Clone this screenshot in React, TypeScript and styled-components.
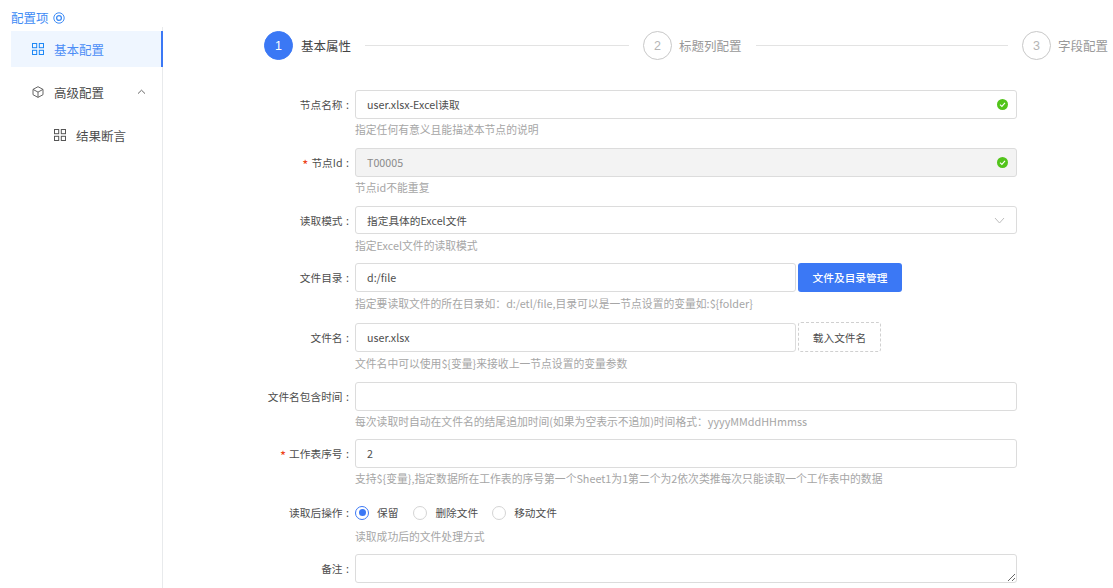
import * as React from "react";
import styled, { createGlobalStyle } from "styled-components";

const GlobalStyle = createGlobalStyle`
    html, body {
        margin: 0;
        height: 100%;
        overflow: hidden;
        background: #fff;
    }
    body, input, textarea, button {
        font-family: "Noto Sans CJK SC", "Noto Sans", sans-serif;
    }
`;

const Page = styled.div`
    display: flex;
    height: 588px;
    overflow: hidden;
    color: #4d4d4d;
`;

const Sidebar = styled.aside`
    width: 152px;
    margin-left: 10px;
    padding-left: 1px;
    flex: none;
    display: flex;
    flex-direction: column;
`;

const SidebarTitle = styled.div`
    height: 27px;
    padding-top: 8px;
    box-sizing: border-box;
    display: flex;
    align-items: center;
    gap: 4px;
    font-size: 12.5px;
    line-height: 14px;
    color: #3f8cf5;
`;

const Menu = styled.nav`
    flex: 1;
    padding-top: 4px;
    border-right: 1px solid #e8eaec;
`;

const MenuItem = styled.div<{ $active?: boolean; $indent?: number }>`
    height: 36px;
    margin-right: -1px;
    margin-bottom: 7px;
    padding-left: ${(p) => p.$indent ?? 21}px;
    padding-right: 15px;
    box-sizing: border-box;
    display: flex;
    align-items: center;
    font-size: 12.5px;
    color: ${(p) => (p.$active ? "#4c8df6" : "#4d4d4d")};
    background: ${(p) => (p.$active ? "#eff6ff" : "transparent")};
    border-right: 2px solid ${(p) => (p.$active ? "#3b78f5" : "transparent")};
`;

const MenuIcon = styled.span<{ $active?: boolean }>`
    width: 22px;
    display: flex;
    color: ${(p) => (p.$active ? "#1e88f5" : "#555")};
`;

const Chevron = styled.span`
    margin-left: auto;
    display: flex;
    color: #555;
`;

const Main = styled.main`
    flex: 1;
    min-width: 0;
`;

const Steps = styled.div`
    display: flex;
    margin: 31px 0 30px 101px;
`;

const Step = styled.div<{ $last?: boolean }>`
    display: flex;
    align-items: center;
    flex: ${(p) => (p.$last ? "none" : "0 0 379px")};
`;

const StepDot = styled.div<{ $active?: boolean }>`
    width: 29px;
    height: 29px;
    box-sizing: border-box;
    border-radius: 50%;
    flex: none;
    display: flex;
    align-items: center;
    justify-content: center;
    font-size: 12.5px;
    font-family: "Liberation Sans", sans-serif;
    color: ${(p) => (p.$active ? "#fff" : "#b5b5b5")};
    background: ${(p) => (p.$active ? "#3b78f5" : "#fff")};
    border: 1px solid ${(p) => (p.$active ? "#3b78f5" : "#c8c8c8")};
`;

const StepLabel = styled.div<{ $active?: boolean }>`
    margin-left: ${(p) => (p.$active ? 8 : 7)}px;
    font-size: 12.5px;
    white-space: nowrap;
    color: ${(p) => (p.$active ? "#444" : "#999")};
`;

const StepLine = styled.div`
    flex: 1;
    height: 1px;
    margin: 0 14px;
    background: #e3e3e3;
`;

const Form = styled.form`
    display: flex;
    flex-direction: column;
`;

const Row = styled.div<{ $pitch: number }>`
    display: grid;
    grid-template-columns: 187px 662px;
    column-gap: 5px;
    height: ${(p) => p.$pitch}px;
    align-content: start;
`;

const Label = styled.label`
    height: 29px;
    padding-right: 1px;
    box-sizing: border-box;
    display: flex;
    align-items: center;
    justify-content: flex-end;
    font-size: 10.7px;
    color: #4d4d4d;
    white-space: nowrap;
`;

const Colon = styled.span`
    margin-left: 3.5px;
`;

const Required = styled.span`
    color: #ed4014;
    margin-right: 3px;
    font-size: 13px;
    line-height: 1;
    padding-top: 3px;
`;

const Control = styled.div`
    display: flex;
    gap: 2px;
    min-width: 0;
`;

const InputBox = styled.div<{ $width?: number }>`
    position: relative;
    flex: ${(p) => (p.$width ? "none" : "1")};
    width: ${(p) => (p.$width ? `${p.$width}px` : "auto")};
    height: 29px;
`;

const Input = styled.input<{ $disabled?: boolean }>`
    width: 100%;
    height: 100%;
    box-sizing: border-box;
    padding: 0 28px 0 11px;
    border: 1px solid #dcdcdc;
    border-radius: 3px;
    outline: none;
    font-size: 10.7px;
    color: ${(p) => (p.$disabled ? "#8a8a8a" : "#4d4d4d")};
    background: ${(p) => (p.$disabled ? "#f3f3f3" : "#fff")};
`;

const Suffix = styled.span`
    position: absolute;
    top: 0;
    right: 9px;
    height: 100%;
    display: flex;
    align-items: center;
`;

const SelectBox = styled.div`
    flex: 1;
    height: 28px;
    box-sizing: border-box;
    padding: 0 11px;
    border: 1px solid #dcdcdc;
    border-radius: 3px;
    display: flex;
    align-items: center;
    justify-content: space-between;
    font-size: 10.7px;
    color: #4d4d4d;
`;

const PrimaryButton = styled.button`
    width: 104px;
    height: 29px;
    padding: 0;
    border: none;
    border-radius: 3px;
    background: #3b78f5;
    color: #fff;
    font-size: 10.7px;
    font-weight: 500;
`;

const DashedButton = styled.button`
    width: 83px;
    height: 30px;
    margin-top: -1px;
    padding: 0;
    border: 1px dashed #d0d0d0;
    border-radius: 3px;
    background: #fff;
    color: #4d4d4d;
    font-size: 10.7px;
`;

const Hint = styled.div<{ $height?: number }>`
    grid-column: 2;
    height: ${(p) => p.$height ?? 20}px;
    display: flex;
    align-items: center;
    font-size: 10.8px;
    color: #a6a6a6;
    white-space: nowrap;
`;

const RadioGroup = styled.div`
    height: 29px;
    display: flex;
    align-items: center;
`;

const RadioItem = styled.span<{ $gap: number }>`
    display: flex;
    align-items: center;
    margin-right: ${(p) => p.$gap}px;
    font-size: 10.7px;
    color: #4d4d4d;
`;

const RadioDot = styled.span<{ $checked?: boolean }>`
    width: 14px;
    height: 14px;
    box-sizing: border-box;
    border-radius: 50%;
    margin-right: 8px;
    border: 1px solid ${(p) => (p.$checked ? "#3b78f5" : "#d4d4d4")};
    display: flex;
    align-items: center;
    justify-content: center;
    &::after {
        content: "";
        width: 7px;
        height: 7px;
        border-radius: 50%;
        background: ${(p) => (p.$checked ? "#3b78f5" : "transparent")};
    }
`;

const TextArea = styled.textarea`
    flex: 1;
    height: 29px;
    box-sizing: border-box;
    padding: 4px 11px;
    border: 1px solid #dcdcdc;
    border-radius: 3px;
    outline: none;
    font-size: 10.7px;
    resize: vertical;
`;

const GridIcon = () => (
    <svg width="12" height="12" viewBox="0 0 12 12" fill="none" stroke="currentColor" strokeWidth="1">
        <rect x="0.5" y="0.5" width="4.2" height="4.2" />
        <rect x="7.3" y="0.5" width="4.2" height="4.2" />
        <rect x="0.5" y="7.3" width="4.2" height="4.2" />
        <rect x="7.3" y="7.3" width="4.2" height="4.2" />
    </svg>
);

const CubeIcon = () => (
    <svg width="12" height="12" viewBox="0 0 12 12" fill="none" stroke="currentColor" strokeWidth="0.9" strokeLinejoin="round">
        <path d="M6 0.7 11 3.4V8.7L6 11.4 1 8.7V3.4Z" />
        <path d="M1.2 3.5 6 6.1 10.8 3.5M6 6.1V11.2" />
    </svg>
);

const ChevronUp = () => (
    <svg width="9" height="6" viewBox="0 0 9 6" fill="none" stroke="currentColor" strokeWidth="0.9">
        <path d="M1 4.6 4.5 1.2 8 4.6" />
    </svg>
);

const ChevronDown = () => (
    <svg width="11" height="7" viewBox="0 0 11 7" fill="none" stroke="#bdbdbd" strokeWidth="1">
        <path d="M1 1 5.5 6 10 1" />
    </svg>
);

const TargetIcon = () => (
    <svg width="12" height="12" viewBox="0 0 12 12" fill="none" stroke="#3f8cf5">
        <circle cx="6" cy="6" r="5.2" strokeWidth="1" />
        <circle cx="6" cy="6" r="2.4" strokeWidth="1.3" />
    </svg>
);

const CheckIcon = () => (
    <svg width="11" height="11" viewBox="0 0 11 11">
        <circle cx="5.5" cy="5.5" r="5.5" fill="#52c41a" />
        <path d="M3 5.6 4.9 7.4 8 3.9" fill="none" stroke="#fff" strokeWidth="1.1" />
    </svg>
);

const steps = ["基本属性", "标题列配置", "字段配置"];

export default function App() {
    return (
        <Page>
            <GlobalStyle />
            <Sidebar>
                <SidebarTitle>配置项 <TargetIcon /></SidebarTitle>
                <Menu>
                    <MenuItem $active>
                        <MenuIcon $active><GridIcon /></MenuIcon>基本配置
                    </MenuItem>
                    <MenuItem>
                        <MenuIcon><CubeIcon /></MenuIcon>高级配置
                        <Chevron><ChevronUp /></Chevron>
                    </MenuItem>
                    <MenuItem $indent={43}>
                        <MenuIcon><GridIcon /></MenuIcon>结果断言
                    </MenuItem>
                </Menu>
            </Sidebar>
            <Main>
                <Steps>
                    {steps.map((s, i) => (
                        <Step key={s} $last={i === steps.length - 1}>
                            <StepDot $active={i === 0}>{i + 1}</StepDot>
                            <StepLabel $active={i === 0}>{s}</StepLabel>
                            {i < steps.length - 1 && <StepLine />}
                        </Step>
                    ))}
                </Steps>
                <Form>
                    <Row $pitch={58}>
                        <Label>节点名称<Colon>:</Colon></Label>
                        <Control>
                            <InputBox>
                                <Input readOnly defaultValue="user.xlsx-Excel读取" />
                                <Suffix><CheckIcon /></Suffix>
                            </InputBox>
                        </Control>
                        <Hint>指定任何有意义且能描述本节点的说明</Hint>
                    </Row>
                    <Row $pitch={58}>
                        <Label><Required>*</Required>节点Id<Colon>:</Colon></Label>
                        <Control>
                            <InputBox>
                                <Input readOnly $disabled defaultValue="T00005" />
                                <Suffix><CheckIcon /></Suffix>
                            </InputBox>
                        </Control>
                        <Hint $height={19}>节点id不能重复</Hint>
                    </Row>
                    <Row $pitch={57}>
                        <Label>读取模式<Colon>:</Colon></Label>
                        <Control>
                            <SelectBox>指定具体的Excel文件<ChevronDown /></SelectBox>
                        </Control>
                        <Hint>指定Excel文件的读取模式</Hint>
                    </Row>
                    <Row $pitch={60}>
                        <Label>文件目录<Colon>:</Colon></Label>
                        <Control>
                            <InputBox $width={441}><Input readOnly defaultValue="d:/file" /></InputBox>
                            <PrimaryButton type="button">文件及目录管理</PrimaryButton>
                        </Control>
                        <Hint $height={22}>指定要读取文件的所在目录如：d:/etl/file,目录可以是一节点设置的变量如:{"${folder}"}</Hint>
                    </Row>
                    <Row $pitch={59}>
                        <Label>文件名<Colon>:</Colon></Label>
                        <Control>
                            <InputBox $width={441}><Input readOnly defaultValue="user.xlsx" /></InputBox>
                            <DashedButton type="button">载入文件名</DashedButton>
                        </Control>
                        <Hint $height={22}>文件名中可以使用{"${变量}"}来接收上一节点设置的变量参数</Hint>
                    </Row>
                    <Row $pitch={57}>
                        <Label>文件名包含时间<Colon>:</Colon></Label>
                        <Control>
                            <InputBox><Input readOnly /></InputBox>
                        </Control>
                        <Hint>每次读取时自动在文件名的结尾追加时间(如果为空表示不追加)时间格式：yyyyMMddHHmmss</Hint>
                    </Row>
                    <Row $pitch={59}>
                        <Label><Required>*</Required>工作表序号<Colon>:</Colon></Label>
                        <Control>
                            <InputBox><Input readOnly defaultValue="2" /></InputBox>
                        </Control>
                        <Hint>支持{"${变量}"},指定数据所在工作表的序号第一个Sheet1为1第二个为2依次类推每次只能读取一个工作表中的数据</Hint>
                    </Row>
                    <Row $pitch={56}>
                        <Label>读取后操作<Colon>:</Colon></Label>
                        <RadioGroup>
                            <RadioItem $gap={15}><RadioDot $checked />保留</RadioItem>
                            <RadioItem $gap={14}><RadioDot />删除文件</RadioItem>
                            <RadioItem $gap={0}><RadioDot />移动文件</RadioItem>
                        </RadioGroup>
                        <Hint $height={17}>读取成功后的文件处理方式</Hint>
                    </Row>
                    <Row $pitch={40}>
                        <Label>备注<Colon>:</Colon></Label>
                        <Control>
                            <TextArea />
                        </Control>
                    </Row>
                </Form>
            </Main>
        </Page>
    );
}
